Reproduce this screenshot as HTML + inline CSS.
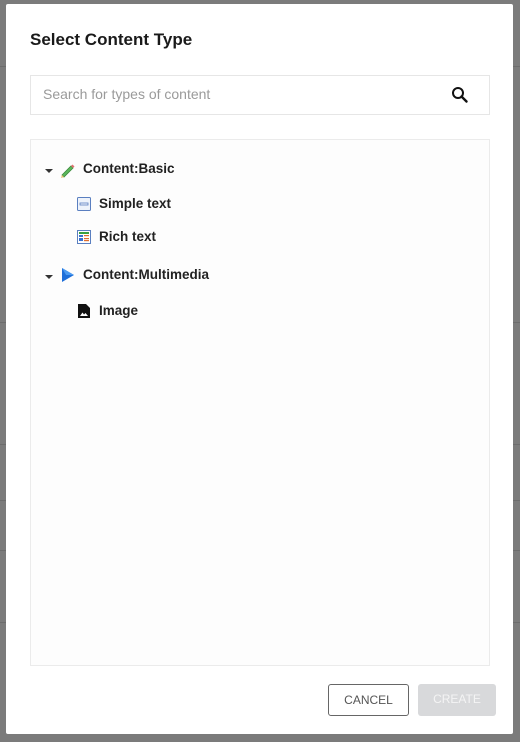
<!DOCTYPE html>
<html><head><meta charset="utf-8"><style>
*{box-sizing:border-box;margin:0;padding:0}
body{width:520px;height:742px;background:#7b7b7b;font-family:"Liberation Sans",sans-serif;position:relative;overflow:hidden}
.bgline{position:absolute;left:0;width:520px;height:1px;background:#6c6c6c}
.modal{position:absolute;left:6px;top:4px;width:507px;height:730px;background:#fff;border-radius:2px}
h1{position:absolute;left:24px;top:26px;font-size:17px;font-weight:bold;color:#1a1a1a}
.search{position:absolute;left:24px;top:71px;width:460px;height:40px;border:1px solid #e6e6e6;}
.search span{position:absolute;left:12px;top:10px;font-size:14px;color:#9a9a9a}
.search svg{position:absolute;left:420px;top:10px}
.tree{position:absolute;left:24px;top:135px;width:460px;height:527px;border:1px solid #ebebeb;background:#fdfdfd}
.row{position:absolute;font-size:13.5px;font-weight:bold;color:#222;white-space:nowrap}
.caret{position:absolute;width:0;height:0;border-left:4px solid transparent;border-right:4px solid transparent;border-top:4px solid #333}
.btn{position:absolute;top:680px;height:32px;border-radius:3px;font-size:12px;text-align:center;line-height:31px}
</style></head><body>
<div class="bgline" style="top:66px"></div>
<div class="bgline" style="top:322px"></div>
<div class="bgline" style="top:444px"></div>
<div class="bgline" style="top:500px"></div>
<div class="bgline" style="top:550px"></div>
<div class="bgline" style="top:622px"></div>
<div class="modal">
<h1>Select Content Type</h1>
<div class="search"><span>Search for types of content</span>
<svg width="18" height="18" viewBox="0 0 18 18"><circle cx="7" cy="7" r="5" fill="none" stroke="#111" stroke-width="2"/><line x1="10.5" y1="10.5" x2="15.5" y2="15.5" stroke="#111" stroke-width="2.4" stroke-linecap="round"/></svg></div>
<div class="tree">
<div class="caret" style="left:14px;top:29px"></div>
<svg style="position:absolute;left:28px;top:22px" width="16" height="16" viewBox="0 0 16 16"><path d="M3 13 L12 4 L14 6 L5 15 Z" fill="#5cb85c" stroke="#3a8a3a" stroke-width="0.8"/><path d="M12 4 L13.5 2.5 L15.5 4.5 L14 6Z" fill="#e07070"/><path d="M3 13 L2 16 L5 15Z" fill="#e8c070"/></svg>
<div class="row" style="left:52px;top:21px">Content:Basic</div>
<svg style="position:absolute;left:46px;top:57px" width="14" height="14" viewBox="0 0 14 14"><rect x="0.5" y="0.5" width="13" height="13" rx="1" fill="#eef3fb" stroke="#5a7fc0"/><rect x="3" y="6" width="8" height="2" fill="none" stroke="#5a7fc0" stroke-width="0.8"/></svg>
<div class="row" style="left:68px;top:56px">Simple text</div>
<svg style="position:absolute;left:46px;top:90px" width="14" height="14" viewBox="0 0 14 14"><rect x="0.5" y="0.5" width="13" height="13" fill="#fff" stroke="#5a7fc0"/><rect x="2" y="2" width="10" height="2" fill="#3aa040"/><rect x="2" y="5" width="4" height="2" fill="#3a70d0"/><rect x="7" y="5" width="5" height="1.2" fill="#e07030"/><rect x="2" y="8" width="4" height="3" fill="#3a70d0"/><rect x="7" y="8" width="5" height="1.2" fill="#e07030"/><rect x="7" y="10" width="5" height="1.2" fill="#e07030"/></svg>
<div class="row" style="left:68px;top:89px">Rich text</div>
<div class="caret" style="left:14px;top:135px"></div>
<svg style="position:absolute;left:30px;top:127px" width="14" height="16" viewBox="0 0 14 16"><path d="M1 1 L13 8 L1 15 Z" fill="#1e6fd9"/><path d="M1 1 L13 8 L5 8 Z" fill="#4a9af0"/></svg>
<div class="row" style="left:52px;top:127px">Content:Multimedia</div>
<svg style="position:absolute;left:47px;top:164px" width="12" height="14" viewBox="0 0 12 14"><path d="M0 0 H8 L12 4 V14 H0Z" fill="#111"/><path d="M2 12 L4.5 8.5 L6 10.5 L7.5 9 L10 12Z" fill="#fff"/></svg>
<div class="row" style="left:68px;top:163px">Image</div>
</div>
<div class="btn" style="left:322px;width:81px;border:1px solid #666;color:#555;background:#fff">CANCEL</div>
<div class="btn" style="left:412px;width:78px;background:#d8d9db;color:#f4f4f4">CREATE</div>
</div>
</body></html>
